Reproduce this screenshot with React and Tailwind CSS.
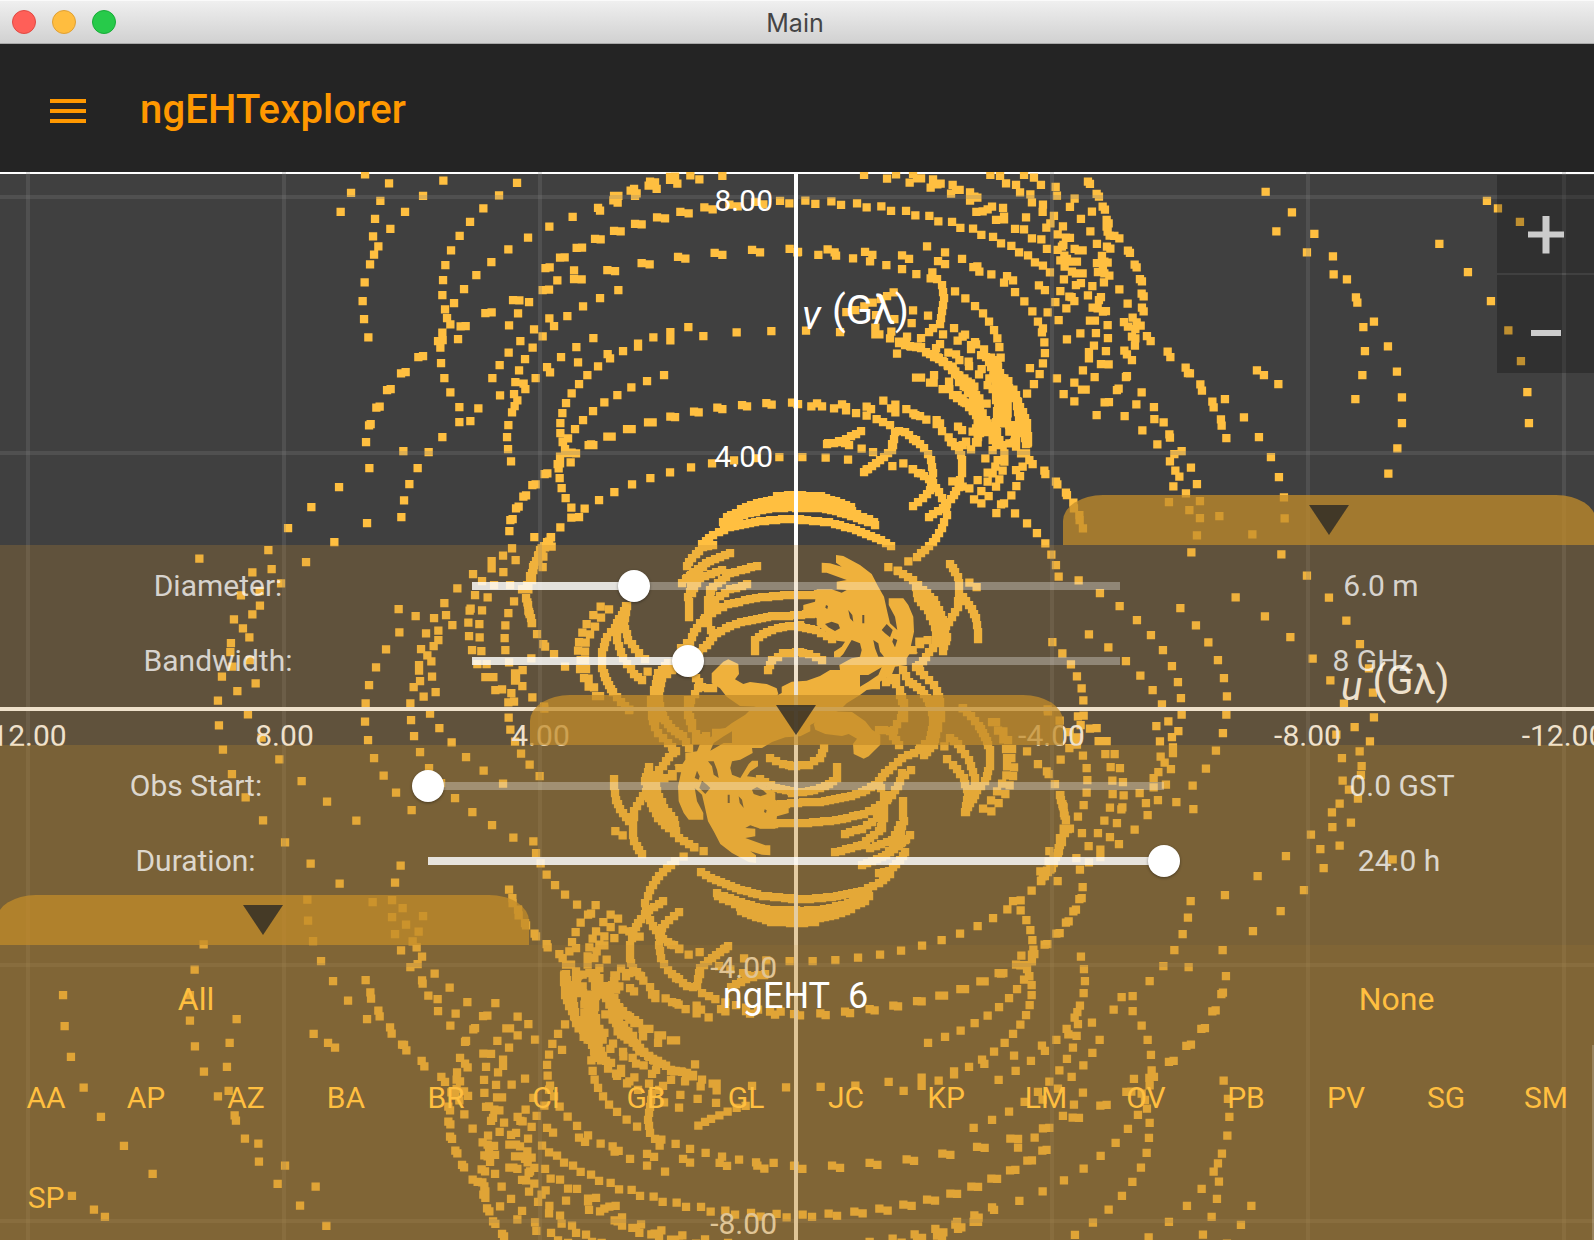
import React from "react";

// Baseline samples of the (u,v) coverage, grouped by region. Coordinates are in
// thirds of a pixel, relative to the region's origin. Only the upper half-plane
// is stored: every baseline also contributes its conjugate at (-u,-v).
const CX = 796;
const CY = 709;

const SAMPLES = [
  [320, 165, `135,28 207,55 93,84 181,108 62,141 165,162 255,141 309,93 370,47 211,192 159,214 175,244 162,269 150,298 134,352 128,408 132,462 145,517
  591,54 537,91 490,130 450,171 419,213 393,256 376,300 369,345 367,390 375,433 381,459 391,478 402,414 432,372 469,330 514,291 565,253 624,218 688,185 758,156 834,129 840,137
  367,503 354,528 368,525 361,548 363,594 373,639 391,682 418,726 418,771 451,768 475,730 367,816 138,831
  422,484 437,483 414,522 496,444 515,442 295,576 309,573 243,625 257,621 201,675 212,672 169,728 179,725 147,781 152,777
  579,405 598,406 627,411 594,445 567,481 642,493 668,514 601,528 638,548 566,563 539,600 615,582 597,616 517,639 586,651 611,656 616,672 582,687 592,706 584,723 576,742 565,780 561,816 540,691
  647,639 681,606 690,622 723,576 769,546 820,519 774,592
  668,375 687,374 712,346 762,316 762,342 785,343 676,309 689,307 720,278 734,277 770,249 786,248 825,222 842,223 882,198 902,199 945,177 965,178 1011,157 1035,160 1081,141 1106,145 1153,127 1178,133 1228,119 1253,124 1305,111 1330,118 1380,108 1408,115
  862,315 885,318 965,294 989,298 1074,276 1096,281 1184,264 1207,270 1296,255 1320,262 1409,252 1434,261
  895,375 840,399 789,424 742,453 688,460 702,483
  1105,486 1051,501 1051,526 1000,517 1150,513 1250,502 1354,498 954,536 954,545 909,558 863,567 870,580 834,604 802,630 777,657 755,685 738,714 727,744 721,774 721,804 728,831 744,820 765,792 789,765 819,738 853,712 892,690 934,667 981,648 1032,630
  813,838 862,815 875,815 921,792 935,792 984,772 998,772 1051,755 1065,756 1122,740 1136,742 1192,728 1207,732 1266,720 1281,724 1339,714 1355,719 1416,713 1434,717
  880,106 893,113 882,93 895,93 932,77 945,93 942,72 950,85 986,62 1005,52 1010,72 990,50 1050,36 1065,35 1065,45 1072,56 1050,45 1111,31 1138,43 1207,33`],
  [796, 165, `204,30 273,41 300,28 351,27 341,53 363,40 375,40 411,43 404,68 434,56 424,58 470,60 465,86 491,75 480,75 522,82 522,107 544,98 535,95 541,141 560,139 575,133 588,125 600,165 621,129 624,163 624,155 657,192 684,193 690,157 708,220 736,223 753,252
  583,30 612,33 630,55 660,60 672,82 684,30 714,38 735,60 703,88 708,112 741,119 740,141 779,66 783,92 774,153 763,175 751,188
  28,107 58,117 106,109 135,120 183,115 212,127 256,124 285,138 330,138 358,151 400,153 427,169 468,171 493,189 531,191 556,210 591,216 615,235 646,243 669,262 696,271 717,292 741,302 762,322
  4,262 67,270 95,253 116,262 120,272 171,280 207,261 229,270 222,289 271,300 318,271 339,282 318,312 361,327 393,244 447,262 426,288 447,297 498,282 532,306 544,304 550,320 586,328 633,333 651,346 624,353 657,381 685,409 709,439 726,470 741,490 738,502 745,532 747,564 741,595 731,627 714,657 693,686 702,609 729,361 747,375 778,411 755,442
  409,322 404,340 151,441 178,435 205,424 230,413 255,402 273,393 293,382 240,450 295,462 351,436 347,474 396,452 474,489 441,508 485,527 507,509 500,515 432,537 420,549 525,552 525,540 537,531 540,538 564,553 562,570 518,590 519,603 549,628 557,612
  238,488 238,508 250,508 286,500 282,520 303,566 309,530 333,515 330,535 345,545 365,545 30,497 132,501 477,379 508,400 537,423 561,445 579,470 594,495 604,520 610,546 614,578 604,600
  390,562 415,575 425,577 440,588 455,600 470,605 490,585 480,568 457,563 478,619 490,632 505,640 515,650 585,578 595,590 605,600 600,610 592,632 580,640 610,625 625,640 637,648 575,660 590,672 625,665 630,680 652,674 645,690 660,695 665,710
  360,638 375,638 414,630 402,653 413,653 459,650 440,672 460,672 472,690 485,690 503,663 500,700 505,712 520,720 525,655 535,665 525,680 540,690 550,700 545,715 572,716 530,735 540,745 560,745 545,765 560,765 575,775 540,790 550,790 530,800 510,830 545,820 590,790 600,790 600,705 610,705 620,700 635,700 605,740 615,740 625,740 635,745 605,760 620,775 590,825 610,825 635,720 650,795 660,780 670,800 660,820 640,800
  486,785 498,795 876,50 882,57 902,87 909,95 836,101 822,126 888,140 920,125 927,134 932,165 938,175 932,185 935,200 941,212 970,220 955,213 883,199 855,162 801,184 785,208 810,218 822,219 802,240 785,255 798,245 836,252 848,256 860,256 903,237 933,245 943,251 996,257 1002,264
  805,272 793,286 813,282 830,290 843,290 806,305 828,320 840,325 860,325 804,343 793,378 840,360 855,354 820,395 835,408 827,396 811,430 788,465 813,523 853,505
  918,273 903,294 925,290 935,293 921,310 906,321 925,325 940,332 924,352 889,363 876,391 915,396 909,405 890,428 905,430 921,440 930,438 882,467 897,467 935,480 900,504 936,519 894,542 879,561 879,580 930,558 915,597 938,598 861,616 896,636 835,653 858,674 869,674 803,687 835,709 783,640 902,750 926,712 939,711
  970,373 995,416 1016,299 1022,307 1032,342 1038,349 1037,386 1043,394 1038,428 1043,439 1010,458 1022,472 1034,482 984,471 996,485 1018,492 1008,515 1018,520 1017,542 985,557 993,568 1008,585 1053,513 1064,528 1115,560 1123,576 1169,608 1176,624 993,633 990,636 968,671 963,675 1037,682 1021,718 986,753 1074,726 1075,762 1103,772 1039,796 1120,808 1122,818 1084,838
  4,717 46,724 63,715 78,724 114,730 138,718 150,726 150,736 180,744 212,725 225,732 212,752 242,762 262,707 298,719 298,742 285,730 331,732 352,745 358,750 372,753 391,764 422,765 422,777 432,775 438,798 458,817 470,832`],
  [1190, 165, `227,81 306,142 259,199 373,207 351,262 429,274 431,328 471,343 498,397 502,413 520,486 552,470 525,558 594,544 517,630 621,620 496,702 636,697 636,774 622,850 595,926 748,237 834,321 903,408 891,108 924,130 990,171 955,496 993,588 1012,681 1017,774 201,616 222,630 265,657 0,625 31,658 36,677 67,710 71,727 105,702 93,763 95,782 109,819 162,757 207,816 243,876 267,936 282,997 284,1060 274,1168 3,908 21,957 30,1008 -2,1035 30,1059 88,1053 187,1108 21,1111 4,1162
  351,1232 137,1297 417,1298 225,1354 469,1367 18,1381 301,1416 510,1437 55,1432 368,1481 84,1485 537,1510 421,1546 102,1539 111,1594 549,1583 462,1616`],
  [320, 440, `250,33 326,36 148,84 293,84 268,132 252,181 244,231 57,141 141,249 43,306 564,27 573,64 806,15 820,15
  728,5 755,38 768,40 720,50 713,72 720,70 716,85 752,67 719,114 725,144 737,174 754,203 794,206 754,233 777,231 721,262 643,291 692,292 674,102 682,100 637,135 647,133 610,170 618,166 588,205 596,200 571,240 578,237 568,273 576,325 549,347 587,360 515,363 515,385 550,396 459,402 486,423 522,435 570,435
  687,305 695,320 675,322 665,325 665,340 655,345 670,350 655,365 642,375 668,381 640,390 630,408 636,420 606,448 625,448 625,438
  837,180 883,156 936,133 991,114 1050,97 1113,82 1176,70 1242,61 1310,54 1378,51 1447,51
  412,445 373,489 378,525 397,555 355,572 355,600 341,618 318,580 342,534 287,528 236,507 238,577 198,628 168,682 147,735 137,790 271,790
  303,627 322,646 334,664 297,675 297,692 336,710 300,723 281,741 347,756 311,770
  465,465 503,472 449,512 452,506 486,511 445,548 478,552 447,588 479,592 456,630 484,633 472,672 500,672 496,711 520,711 526,750 546,748 574,759 565,787 582,785
  582,484 565,519 556,556 554,594 556,630 567,667 634,655 608,690 585,700 588,715 585,722 607,738 637,772 618,475 622,487 625,512 629,522 635,549 651,582 670,612 675,620 702,642 735,680
  842,500 867,508 820,525 843,533 800,552 825,560 787,578 810,583 777,606 797,608 774,632 795,635 782,660 795,660 780,687 798,687 792,714 806,716 806,740 822,742 828,768 840,768 672,800 983,695`],
  [0, 480, `934,81 864,144 918,246 805,210 598,236 757,277 815,267 843,310 779,333 723,346 780,377 757,403 702,418 729,445 748,472 693,489 691,516 750,540 697,560 666,590 767,610 712,633 654,662`],
  [796, 440, `89,53 156,59 197,26 231,36 289,78 322,70 350,88 375,100 212,88 469,124 488,133 500,140 520,145 545,120 556,153 534,178 556,190 578,168 600,140 575,125 575,98 590,100 610,118 598,80 620,92 605,60 625,65 568,55 590,30 600,15 620,15 625,40 640,10 655,5 660,20 695,10 675,40 690,40 700,60 710,72 680,80 660,90 672,108 661,138 646,166 624,190 615,193 601,219 657,220 693,250 723,279 748,310 766,344 780,375 788,410 848,421 912,459 971,498 1023,540 1065,585 1101,630 1128,678 1146,726 1155,774 500,15 525,28 545,8
  745,92 748,102 780,125 784,133 810,158 813,165 832,188 834,205 850,225 851,240 861,265 337,364 277,381 305,392 520,428 542,441 769,606 799,640 825,673 843,709 857,745 862,781 879,583 937,622 990,663 1033,707 1070,750 1098,793 1153,504
  1157,33 1135,42 1122,64 1138,92 1150,110 1132,139 1170,160 1119,186 500,805 525,828 755,808 370,605 395,600 350,630 372,612`],
];

// Densely sampled baselines: corner points of each arc, filled in at a fixed step.
const TRACKS = [
  [796, 165, `422,343 438,359 444,400 434,458 432,478/410,488 398,500/375,520 375,545/262,770 283,780 296,800 295,822 288,838/310,798 328,800 350,822 372,836/195,799 150,822 110,834 95,834
  415,575 455,600 485,630 515,665 545,720/445,590 500,650 530,700/390,562 430,580/580,590 605,650 610,700 640,780/600,590 618,640 622,720 600,790/665,710 680,740 692,775 696,830/535,690 550,720 560,790 540,830/660,690 665,740 680,800/470,690 510,715 540,750/570,765 590,800 605,838/310,535 375,550/650,835 665,800/675,750 690,838
  525,670 550,730 575,800/585,590 600,640 600,700/640,670 670,730 690,800/555,570 600,585/605,720 600,770 605,830/490,650 530,690`],
  [320, 440, `728,5 735,28 745,38/692,292 660,330 640,380 630,420 612,448/618,475 628,515 636,550
  918,498 905,525 885,563 860,590 846,635 846,685 855,712 867,735 880,757 903,785 928,810/922,498 912,550 925,600 957,640 975,658/890,560 890,600 910,655 943,702 965,720
  1210,246 1240,225 1280,208 1340,195 1440,193/1262,208 1310,190 1370,175 1440,165/1370,167 1440,165/1220,232 1290,200 1440,180/1222,244 1290,218 1360,204 1440,201/1145,312 1180,285 1230,262 1290,248 1350,240 1440,236
  1180,315 1150,320 1115,355 1100,378/1230,338 1170,362 1120,395 1087,430/1150,380 1100,415/1310,378 1230,400 1180,440 1163,480 1165,550 1178,590/1205,390 1140,415 1115,460/1120,410 1105,470 1107,530/1282,432 1230,448 1185,480/1170,450 1172,500
  1440,465 1360,467 1290,477 1225,492 1175,518 1140,550 1115,590 1110,615/1440,525 1340,530 1280,542 1230,557 1190,580 1150,625 1110,660 1040,690/1185,505 1155,535/1083,625 1100,610
  1440,555 1390,560 1340,575 1305,600 1305,632/1440,637 1390,640 1355,660 1345,690
  1045,668 1015,700 1003,750 997,800 1005,845/1055,690 1025,715 1018,760 1010,830/1120,700 1145,740 1180,745/1135,745 1112,780 1105,810 1115,850`],
  [796, 440, `92,12 115,8 135,5 160,15/295,-3 287,30 265,50 240,70 203,95/360,0 385,25 405,60 412,100 403,150 380,175 350,198/350,88 400,118 430,155 448,190 452,225 438,265 420,295 400,318 362,350/465,5 490,30 497,60 497,100 488,140 465,178 440,205 425,213 399,230
  0,165 75,168 165,200/0,180 60,180 140,198 237,255/0,193 80,193 150,210 235,245/0,203 90,206 150,222 215,245/0,237 100,247 180,270 240,293 285,318
  305,392 350,420 380,450 415,480 440,540 452,590 442,632/360,440 365,475 395,510 418,560 420,610 390,650 370,675/375,450 405,500 425,560 430,600
  462,372 485,410 490,450 485,500 460,545 440,570/490,460 520,495 540,535 547,575 547,598/320,690 340,725 375,750 400,785/360,680 385,705 415,735 430,770 435,835/290,715 312,750 325,790 325,835/400,780 410,835/300,715 270,725
  0,465 100,462 160,490/0,525 60,520 110,520/0,558 60,570 108,598/0,637 40,642 78,660`],
];

// Regions where the samples merge into a solid area, with their gaps.
const FILLS = `470,118 515,118 545,128 560,120 530,118 530,95 560,90 500,68 485,68 485,38 510,40 545,50 528,38 528,15 550,18 600,45 635,72 655,110 672,140 682,185 690,220 712,240 705,200 686,165 686,145 730,145 745,165 760,200 762,245 752,290 775,310 750,310 740,325 740,345 705,350 695,375 660,395 660,418 636,418 620,420 600,435 560,460 540,480 500,500 440,530 408,545 340,530 365,430 365,410 395,395 440,392 480,378 510,360 540,360 538,345 575,325 600,320 605,300 600,280 575,270 560,295 550,312 540,322 522,322 522,305 545,290 555,275 530,272 470,225 470,205 430,185 430,165 465,155
/495,222 515,215 535,222 540,235 525,243 505,232/665,240 680,222 698,240 690,262 675,250/640,270 655,280 660,305 672,320 655,320 645,295/565,180 577,195 580,215 570,205/607,195 613,195 613,220 607,220/600,375 625,375 665,352 655,375 625,395 600,410/700,265 712,270 705,292 697,275/498,165 504,168 502,177 496,173/155,400 155,370 190,335 205,328 235,342 237,372 225,388 250,402 270,396 320,402 350,415 355,432 340,450 300,470 240,468 200,440 180,415`;

const parse = (s) =>
  s.trim().split(/\s+/).map((p) => p.split(",").map(Number));

function collect() {
  const out = [];
  SAMPLES.forEach(([ox, oy, s]) =>
    parse(s).forEach(([x, y]) => out.push([ox + x / 3, oy + y / 3]))
  );
  TRACKS.forEach(([ox, oy, s]) =>
    s.split(/[/\n]/).forEach((line) => {
      if (!line.trim()) return;
      const p = parse(line);
      for (let i = 0; i < p.length - 1; i++) {
        const [x0, y0] = p[i];
        const [x1, y1] = p[i + 1];
        const n = Math.max(1, Math.round(Math.hypot(x1 - x0, y1 - y0) / 17));
        for (let k = 0; k <= n; k++) {
          out.push([
            Math.round(ox + (x0 + ((x1 - x0) * k) / n) / 3),
            Math.round(oy + (y0 + ((y1 - y0) * k) / n) / 3),
          ]);
        }
      }
    })
  );
  return out;
}

const square = (x, y) => `M${(x - 4.15).toFixed(1)} ${(y - 4.15).toFixed(1)}h8.3v8.3h-8.3z`;
const POINTS = collect();
const MARKS = POINTS.map(([x, y]) => square(x, y) + square(2 * CX - x, 2 * CY - y)).join("");
const SOLID = FILLS.split("/")
  .map((ring) => "M" + parse(ring).map(([x, y]) => `${(660 + x / 3).toFixed(1)} ${(550 + y / 3).toFixed(1)}`).join("L") + "Z")
  .join("");

const GRID_X = [28, 284, 540, 1052, 1308, 1564];
const GRID_Y = [197, 453, 965, 1221];

function Plot() {
  const y0 = 172;
  return (
    <svg className="absolute inset-0 h-full w-full" viewBox="0 172 1594 1068" fontFamily="Roboto, sans-serif">
      <rect x="0" y={y0} width="1594" height="2" fill="#fff" />
      <g fill="#ffbf40">
        <path d={MARKS} />
        <path d={SOLID} fillRule="evenodd" />
        <path d={SOLID} fillRule="evenodd" transform={`rotate(180 ${CX} ${CY})`} />
      </g>
      <g fill="#808080" fillOpacity="0.25">
        {GRID_X.map((x) => <rect key={x} x={x - 2} y={y0} width="4" height="1068" />)}
        {GRID_Y.map((y) => <rect key={y} x="0" y={y - 2} width="1594" height="4" />)}
      </g>
      <g fill="#fff">
        <rect x="794" y={y0} width="4" height="1068" />
        <rect x="0" y="707" width="1594" height="4" />
      </g>
      <g fill="#fff" fontSize="30">
        <text x="773" y="211" textAnchor="end">8.00</text>
        <text x="773" y="467" textAnchor="end">4.00</text>
        <text x="777" y="977.5" textAnchor="end">-4.00</text>
        <text x="777" y="1233.5" textAnchor="end">-8.00</text>
        <text x="29" y="745.5" textAnchor="middle">12.00</text>
        <text x="284.5" y="745.5" textAnchor="middle">8.00</text>
        <text x="540.5" y="745.5" textAnchor="middle">4.00</text>
        <text x="1051.5" y="745.5" textAnchor="middle">-4.00</text>
        <text x="1307.5" y="745.5" textAnchor="middle">-8.00</text>
        <text x="1563.5" y="745.5" textAnchor="middle">-12.00</text>
      </g>
      <g fill="#fff" fontSize="40">
        <text x="802" y="329" fontStyle="italic">v</text>
        <text x="832" y="323.5">(Gλ)</text>
        <text x="1341" y="700" fontStyle="italic">u</text>
        <text x="1372.5" y="693.5">(Gλ)</text>
      </g>
    </svg>
  );
}

function Tab({ className }) {
  return (
    <div className={"flex h-[50px] w-[533px] shrink-0 justify-center bg-[#c38c2a]/75 pt-[10px] [border-radius:40px_40px_0_0/26px_26px_0_0] " + className}>
      <svg width="40" height="30" viewBox="0 0 40 30">
        <path d="M0 0H40L20 30Z" fill="#242424" fillOpacity="0.77" />
      </svg>
    </div>
  );
}

function Slider({ label, value, fill, className, labelClass, valueClass }) {
  return (
    <div className="flex h-[75px] items-center text-[30px] leading-none text-white/75">
      <span className={"shrink-0 text-center " + labelClass}>{label}</span>
      <div className={"relative h-2 shrink-0 bg-white/30 " + className}>
        <div className="h-2 bg-white/75" style={{ width: fill + "px" }} />
        <div
          className="absolute -top-3 -ml-4 size-8 rounded-full bg-white shadow-[0_1px_3px_rgba(0,0,0,0.4)]"
          style={{ left: fill + "px" }}
        />
      </div>
      <span className={"shrink-0 text-center " + valueClass}>{value}</span>
    </div>
  );
}

const STATIONS = ["AA", "AP", "AZ", "BA", "BR", "CI", "GB", "GL", "JC", "KP", "LM", "OV", "PB", "PV", "SG", "SM", "SP"];

export default function App() {
  return (
    <div className="flex h-[1240px] w-[1594px] flex-col overflow-hidden bg-[#404040] font-[Roboto,sans-serif]">
      <div className="relative flex h-11 shrink-0 items-center justify-center border-b border-[#a8a8a8] bg-linear-to-b from-[#f0f0f0] to-[#d1d1d1] shadow-[inset_0_1px_0_#fafafa]">
        <div className="absolute left-3 top-[10px] flex gap-4">
          <span className="size-6 rounded-full border border-[#e04a43] bg-[#ff5f58]" />
          <span className="size-6 rounded-full border border-[#dfa035] bg-[#ffbd3f]" />
          <span className="size-6 rounded-full border border-[#18ac38] bg-[#27ca4a]" />
        </div>
        <span className="mr-[4px] mt-[3px] font-[Inter,sans-serif] text-[25px] leading-none text-[#454545]">Main</span>
      </div>

      <div className="flex h-32 shrink-0 items-center bg-[#242424] pl-[50px]">
        <div className="mt-[6px] flex w-9 flex-col gap-[6px]">
          <span className="h-1 bg-[#ff9800]" />
          <span className="h-1 bg-[#ff9800]" />
          <span className="h-1 bg-[#ff9800]" />
        </div>
        <h1 className="ml-[54px] mt-[4px] text-[40px] font-medium leading-none tracking-[0.15px] text-[#ff9800]">ngEHTexplorer</h1>
      </div>

      <div className="relative flex-1 overflow-hidden">
        <Plot />

        <div className="absolute right-0 top-[2.5px] flex w-[97px] flex-col gap-[2px]">
          <div className="flex h-[98px] items-center justify-center bg-black/25 pt-[22px]">
            <svg width="36" height="38" viewBox="0 0 36 38">
              <path d="M14.5 0h7v15.5H36v6H21.5V37.5h-7V21.5H0v-6H14.5z" fill="#ccc" />
            </svg>
          </div>
          <div className="flex h-[98px] items-center justify-center bg-black/25 pt-[19px]">
            <span className="h-[5.5px] w-[30px] bg-[#ccc]" />
          </div>
        </div>

        <div className="absolute inset-x-0 bottom-0 top-[322.5px] flex flex-col">
          <Tab className="-mr-[1.5px] self-end" />
          <div className="relative flex flex-1 flex-col bg-[#c08830]/25 pt-1">
            <Slider label="Diameter:" value="6.0 m" fill={162} className="w-[648px]" labelClass="w-[436px] mr-9" valueClass="w-[436px] ml-[43px]" />
            <Slider label="Bandwidth:" value="8 GHz" fill={216} className="w-[648px]" labelClass="w-[436px] mr-9" valueClass="w-[436px] ml-[35px]" />
            <Tab className="absolute left-[529.5px] top-[150px]" />
            <div className="mt-[46px] flex flex-1 flex-col bg-[#c38e28]/25 pt-1">
              <Slider label="Obs Start:" value="0.0 GST" fill={0} className="w-[736px]" labelClass="w-[392px] mr-9" valueClass="w-[430px] ml-[23px]" />
              <Slider label="Duration:" value="24.0 h" fill={736} className="w-[736px]" labelClass="w-[391px] mr-[37px]" valueClass="w-[430px] ml-5" />
              <Tab className="-ml-1 -mt-1" />
              <div className="relative flex-1 bg-[#c08830]/10 text-[#ffbf40]">
                <div className="flex h-[103px] items-center justify-between leading-none">
                  <span className="mt-[5px] w-[392px] text-center text-[32px]">All</span>
                  <span className="text-[36px] text-white">ngEHT&nbsp; 6</span>
                  <span className="mt-[5px] w-[395px] text-center text-[32px]">None</span>
                </div>
                <div className="-ml-[4px] grid w-[1600px] grid-cols-16 text-center text-[30px] leading-[100px]">
                  {STATIONS.map((s) => <span key={s}>{s}</span>)}
                </div>
                <div className="absolute bottom-0 right-0 top-[100px] w-[2px] bg-white/20" />
              </div>
            </div>
          </div>
        </div>
      </div>
    </div>
  );
}
